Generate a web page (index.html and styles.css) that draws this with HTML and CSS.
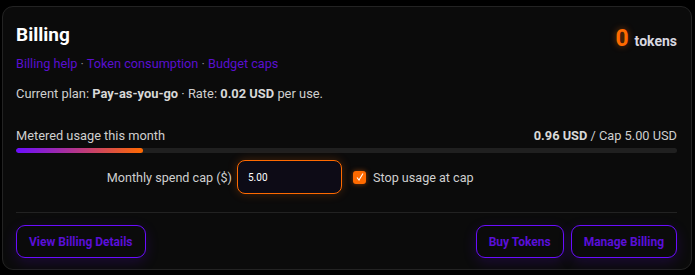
FILE: index.html
```html
<!DOCTYPE html>
<html>
<head>
<meta charset="utf-8">
<link rel="stylesheet" href="styles.css">
</head>
<body>
<div class="card">
  <div class="head">
    <div class="head-left">
      <h1 class="title">Billing</h1>
      <div class="links">
        <a class="link" href="#">Billing help</a><span class="dot"> · </span><a class="link" href="#">Token consumption</a><span class="dot"> · </span><a class="link" href="#">Budget caps</a>
      </div>
    </div>
    <div class="tokens"><span class="tok-num">0</span><span class="tok-label">tokens</span></div>
  </div>
  <p class="plan">Current plan: <b>Pay-as-you-go</b> · Rate: <b>0.02 USD</b> per use.</p>
  <div class="usage-row">
    <span>Metered usage this month</span>
    <span><b>0.96 USD</b> / Cap 5.00 USD</span>
  </div>
  <div class="bar"><div class="fill" style="width:19.2%"></div></div>
  <div class="cap-row">
    <label class="cap-label">Monthly spend cap ($)</label>
    <div class="input">5.00</div>
    <span class="check"><svg width="10" height="10" viewBox="0 0 10 10"><path d="M2 5.5 L4 8 L8 1.5" fill="none" stroke="#fff" stroke-width="1.1"/></svg></span>
    <span class="check-label">Stop usage at cap</span>
  </div>
  <div class="divider"></div>
  <div class="actions">
    <button class="btn">View Billing Details</button>
    <div class="spacer"></div>
    <button class="btn">Buy Tokens</button>
    <button class="btn">Manage Billing</button>
  </div>
</div>
</body>
</html>
```
FILE: styles.css
```css
html, body { margin: 0; padding: 0; background: #000; }
body { font-family: Roboto, "Noto Sans", sans-serif; color: #cfcfcf; }
.card {
  margin: 6px 3px 0 2px;
  height: 264px;
  box-sizing: border-box;
  background: #0b0b0b;
  border: 1px solid #232323;
  border-radius: 11px;
  padding: 16px 14px 0 13px;
}
.head { display: flex; justify-content: space-between; align-items: flex-start; }
.title { margin: 0; font-size: 19px; line-height: 24px; font-weight: 700; color: #fff; }
.links { margin-top: 8px; font-size: 12.7px; line-height: 18px; }
.link { color: #5a0fd0; text-decoration: none; }
.dot { color: #8a8a8a; }
.tokens { display: flex; align-items: baseline; gap: 6px; padding-top: 4px; }
.tok-num { font-size: 23px; font-weight: 700; color: #ff6a00; text-shadow: 0 0 6px rgba(255,106,0,0.5); line-height: 24px; }
.tok-label { font-size: 14px; font-weight: 700; color: #d8d8e0; }
.plan { margin: 12px 0 0; font-size: 12.9px; line-height: 18px; color: #cfcfcf; }
.plan b { color: #d8d8d8; }
.usage-row { display: flex; justify-content: space-between; margin-top: 24px; font-size: 12.8px; line-height: 18px; color: #cfcfcf; }
.usage-row b { color: #d8d8d8; }
.bar { margin-top: 3px; height: 5px; background: #202020; border-radius: 3px; overflow: hidden; }
.fill { height: 100%; background: linear-gradient(90deg, #6a0dff, #c03c78 55%, #ff6a00); border-radius: 3px; }
.cap-row { display: flex; align-items: center; margin-top: 7px; height: 34px; }
.cap-label { width: 216px; text-align: right; font-size: 12.6px; color: #cfcfcf; }
.input {
  margin-left: 5px; width: 105px; height: 34px; box-sizing: border-box;
  border: 1px solid #ff6a00; border-radius: 8px; background: #0d0b16;
  color: #fff; font-size: 10px; padding-left: 10px; display: flex; align-items: center;
  box-shadow: 0 0 10px rgba(255,106,0,0.25);
}
.check {
  margin-left: 11px; width: 13px; height: 13px; border-radius: 3px; background: #ff6a00;
  display: flex; align-items: center; justify-content: center;
  box-shadow: 0 0 5px rgba(255,106,0,0.5);
}
.check-label { margin-left: 7px; font-size: 12.6px; color: #cfcfcf; }
.divider { margin-top: 18px; height: 1px; background: #222; }
.actions { display: flex; gap: 7px; margin-top: 12px; }
.spacer { flex: 1; }
.btn {
  height: 33px; padding: 0 12px; box-sizing: border-box;
  background: transparent; border: 1px solid #6a0dff; border-radius: 9px;
  color: #5a0fd8; font-family: inherit; font-size: 12px; font-weight: 700;
  box-shadow: 0 4px 14px rgba(106,13,255,0.18);
}
```
